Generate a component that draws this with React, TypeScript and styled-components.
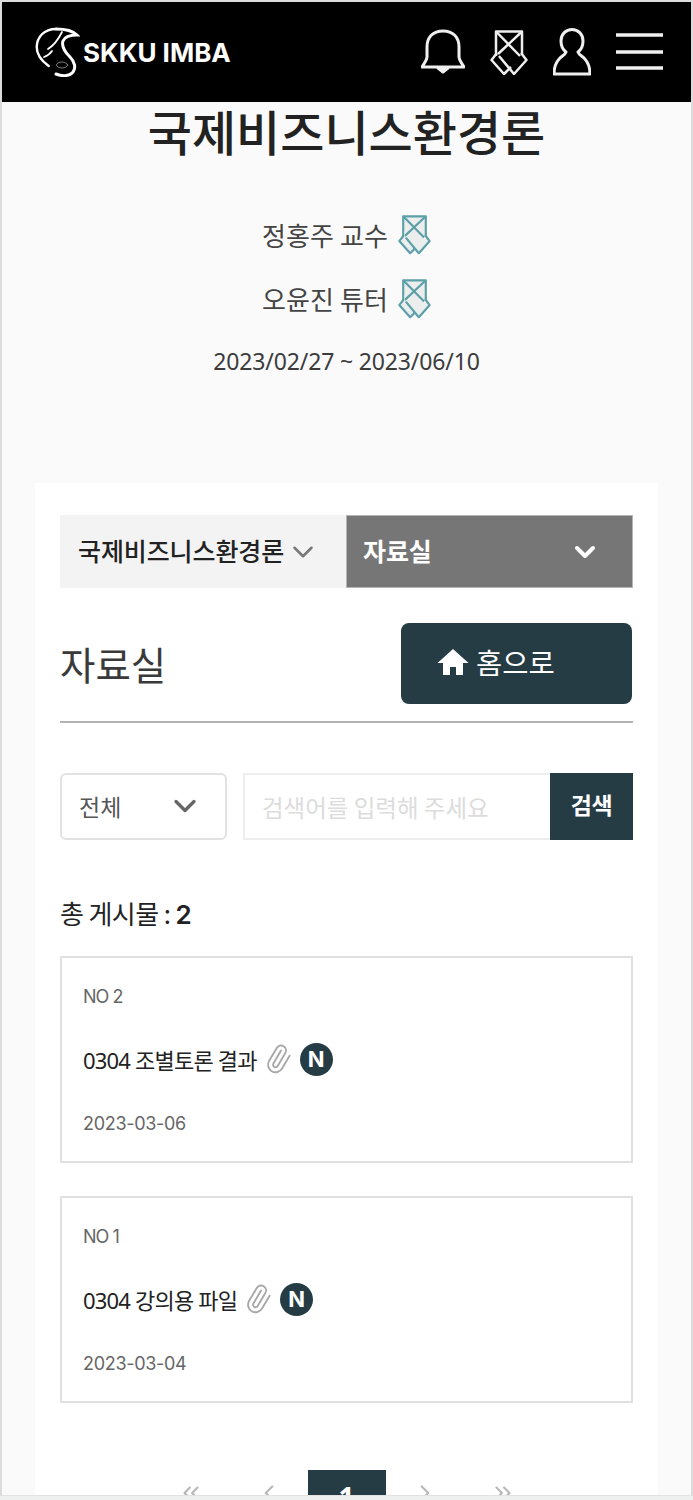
import styled, { createGlobalStyle } from 'styled-components';
import { ChevronDown, ChevronLeft, ChevronRight, ChevronsLeft, ChevronsRight, Paperclip } from 'lucide-react';

const GlobalStyle = createGlobalStyle`
  html, body {
    margin: 0;
    padding: 0;
    background: #eef0f0;
  }
  * {
    box-sizing: border-box;
  }
  body {
    font-family: 'Noto Sans', 'Noto Sans CJK KR', sans-serif;
  }
`;

const Frame = styled.div`
  width: 693px;
  height: 1496px;
  overflow: hidden;
  background: #fafafa;
  border: 2px solid #dcdcdc;
  border-bottom: 1px solid #e2e2e2;
`;

const Header = styled.header`
  height: 100px;
  background: #000;
  display: flex;
  align-items: center;
  justify-content: space-between;
  padding: 0 28px 0 32px;
`;

const Brand = styled.div`
  display: flex;
  align-items: center;
  gap: 3px;
`;

const BrandName = styled.span`
  color: #fff;
  font-family: 'Inter', sans-serif;
  font-size: 26px;
  font-weight: 700;
`;

const HeaderIcons = styled.nav`
  display: flex;
  align-items: center;
  gap: 25px;
`;

const Intro = styled.section`
  display: flex;
  flex-direction: column;
  align-items: center;
  height: 381px;
`;

const CourseTitle = styled.h1`
  margin: 0;
  font-family: 'Noto Sans CJK KR', sans-serif;
  font-size: 48px;
  line-height: 56px;
  font-weight: 500;
  color: #222;
`;

const PersonName = styled.span`
  padding-bottom: 2px;
  letter-spacing: 0.1px;
`;

const Person = styled.div`
  display: flex;
  align-items: center;
  gap: 10px;
  height: 64px;
  font-family: 'Noto Sans CJK KR', sans-serif;
  font-size: 26px;
  color: #444;
  &:first-of-type {
    margin-top: 45px;
  }
`;

const Period = styled.div`
  margin-top: 14px;
  font-size: 23px;
  line-height: 32px;
  letter-spacing: -0.15px;
  color: #3c3c3c;
`;

const Panel = styled.main`
  margin: 0 33px;
  padding: 32px 25px 0;
  background: #fff;
  height: 1100px;
`;

const Tabs = styled.div`
  display: grid;
  grid-template-columns: 286px 287px;
  height: 73px;
`;

const TabLabel = styled.span`
  padding-bottom: 4px;
`;

const Tab = styled.div<{ $active?: boolean }>`
  display: flex;
  align-items: center;
  justify-content: ${(p) => (p.$active ? 'space-between' : 'flex-start')};
  gap: 2px;
  padding: ${(p) => (p.$active ? '0 31px 0 16px' : '0 0 0 18px')};
  background: ${(p) => (p.$active ? '#767676' : '#f3f3f3')};
  border: ${(p) => (p.$active ? '1px solid #b5b5b5' : 'none')};
  color: ${(p) => (p.$active ? '#fff' : '#222')};
  font-family: 'Noto Sans CJK KR', sans-serif;
  font-size: 25px;
  font-weight: ${(p) => (p.$active ? 700 : 500)};
  letter-spacing: -0.1px;
  svg {
    color: ${(p) => (p.$active ? '#fff' : '#777')};
  }
`;

const BoardHead = styled.div`
  display: flex;
  align-items: flex-start;
  justify-content: space-between;
  height: 135px;
  padding: 35px 1px 0 0;
  border-bottom: 2px solid #b2b2b2;
`;

const BoardTitle = styled.h2`
  margin: 15px 0 0;
  font-family: 'Noto Sans CJK KR', sans-serif;
  font-size: 38.5px;
  line-height: 50px;
  font-weight: 400;
  color: #3a3a3a;
`;

const HomeButton = styled.button`
  display: flex;
  align-items: center;
  gap: 7px;
  width: 231px;
  height: 81px;
  padding: 0 0 4px 36px;
  background: #263c44;
  border: none;
  border-radius: 8px;
  color: #fff;
  font-family: 'Noto Sans CJK KR', sans-serif;
  font-size: 28.5px;
  font-weight: 400;
`;

const SearchRow = styled.form`
  display: flex;
  height: 67px;
  margin-top: 50px;
`;

const CategorySelect = styled.div`
  display: flex;
  align-items: center;
  justify-content: space-between;
  width: 167px;
  padding: 0 22px 2px 17px;
  margin-right: 16px;
  background: #fff;
  border: 2px solid #e2e2e2;
  border-radius: 6px;
  font-family: 'Noto Sans CJK KR', sans-serif;
  font-size: 23px;
  color: #555;
  svg {
    color: #666;
  }
`;

const SearchInput = styled.div`
  display: flex;
  align-items: center;
  width: 307px;
  padding-left: 17px;
  border: 2px solid #eeeeee;
  border-right: none;
  font-family: 'Noto Sans CJK KR', sans-serif;
  font-size: 23.5px;
  color: #dcdcdc;
`;

const SearchButton = styled.button`
  width: 83px;
  padding: 0 0 5px;
  background: #263c44;
  border: none;
  color: #fff;
  font-family: 'Noto Sans CJK KR', sans-serif;
  font-size: 23px;
  font-weight: 700;
  letter-spacing: -0.5px;
`;

const TotalCount = styled.div`
  margin-top: 56px;
  height: 36px;
  font-family: 'Noto Sans CJK KR', sans-serif;
  font-size: 26px;
  line-height: 34px;
  letter-spacing: -0.6px;
  color: #222;
`;

const CountNumber = styled.b`
  font-family: 'Inter', sans-serif;
  font-weight: 600;
`;

const PostList = styled.ul`
  display: flex;
  flex-direction: column;
  gap: 33px;
  margin: 24px 0 0;
  padding: 0;
  list-style: none;
`;

const PostCard = styled.li`
  height: 207px;
  padding: 27px 21px 0;
  border: 2px solid #e0e0e0;
`;

const PostNumber = styled.div`
  height: 24px;
  font-family: 'Inter', sans-serif;
  font-size: 18px;
  line-height: 24px;
  letter-spacing: -1px;
  color: #666;
`;

const PostTitle = styled.div`
  display: flex;
  align-items: center;
  height: 34px;
  margin-top: 33px;
  font-family: 'Noto Sans', 'Noto Sans CJK KR', sans-serif;
  font-size: 22px;
  letter-spacing: -0.8px;
  color: #222;
  svg {
    margin-left: 6px;
    color: #a8a8a8;
    transform: rotate(-14deg);
  }
`;

const NewBadge = styled.span`
  display: flex;
  align-items: center;
  justify-content: center;
  width: 33px;
  height: 33px;
  margin-left: 7px;
  border-radius: 50%;
  background: #263c44;
  color: #fff;
  font-family: 'Inter', sans-serif;
  font-size: 22px;
  font-weight: 700;
  letter-spacing: 0;
`;

const PostDate = styled.div`
  margin-top: 36px;
  font-family: 'Inter', sans-serif;
  font-size: 18px;
  line-height: 24px;
  letter-spacing: -0.3px;
  color: #666;
`;

const Pagination = styled.div`
  display: flex;
  justify-content: center;
  margin-top: 67px;
`;

const PageItem = styled.div<{ $current?: boolean }>`
  display: flex;
  align-items: flex-start;
  justify-content: center;
  width: 78px;
  height: 78px;
  padding-top: ${(p) => (p.$current ? '13px' : '10px')};
  background: ${(p) => (p.$current ? '#263c44' : 'transparent')};
  color: ${(p) => (p.$current ? '#fff' : '#b8b8b8')};
  font-size: 28px;
  line-height: 28px;
  font-weight: 700;
`;

function LogoMark() {
  return (
    <svg width="46" height="50" viewBox="0 0 46 50" fill="none" stroke="#fff" strokeLinecap="round">
      <path d="M22 2C10 2 3 10 2.7 20c0 8 5 14 12 19" strokeWidth="2.4" />
      <path d="M22 2c8 0 16 1 21 6-6 0-12 1-14 6-2 6 2 11 7 16 5 5 6 11 3 15-4 5-12 4-17 2" strokeWidth="3" />
      <path d="M28 5c-4 8-9 14-14 17M10 30c3-1 6-3 8-6" strokeWidth="1.8" />
      <ellipse cx="28" cy="38" rx="5.5" ry="3" strokeWidth="0.8" stroke="#999" />
    </svg>
  );
}

function BellIcon() {
  return (
    <svg width="44" height="46" viewBox="0 0 44 46" fill="none" stroke="#efefef" strokeWidth="3" strokeLinejoin="round">
      <path d="M6 28V18C6 8 12 2 22 2s16 6 16 16v10c0 4 3 6 5 10H1c2-4 5-6 5-10z" />
      <path d="M17 39h10l-5 4z" fill="#efefef" />
    </svg>
  );
}

function ScarfIcon({ color, fill, size }: { color: string; fill?: string; size: number }) {
  return (
    <svg width={size} height={(size * 45) / 38} viewBox="0 0 38 45" fill="none" stroke={color} strokeWidth="2.5" strokeLinejoin="round">
      <path d="M6 26V1.5h26V24" fill={fill} />
      <path d="M7 23L1.5 30 14 44l7-7" fill={fill} />
      <path d="M8 16l28.5 14L24 44 7 24z" fill={fill} stroke="none" />
      <path d="M31 23l5.5 7L24 44 9 26" />
      <path d="M6 1.5L30 26M32 1.5L8 24" />
    </svg>
  );
}

function UserIcon() {
  return (
    <svg width="38" height="48" viewBox="0 0 38 48" fill="none" stroke="#efefef" strokeWidth="3" strokeLinejoin="round">
      <path d="M13 24C9 21 8 17 8 13 8 6 13 1.5 19 1.5S30 6 30 13c0 4-1 8-5 11 1 3 4 4 6 6 4 4 6 9 6 16H1c0-7 2-12 6-16 2-2 5-3 6-6z" />
    </svg>
  );
}

function MenuIcon() {
  return (
    <svg width="47" height="40" viewBox="0 0 47 40" stroke="#efefef" strokeWidth="3.4">
      <path d="M0 3h47M0 20h47M0 36h47" />
    </svg>
  );
}

function HomeIcon() {
  return (
    <svg width="32" height="28" viewBox="0 0 32 28" fill="#fff">
      <path d="M16 1L0.5 15H6v12h7v-8h6v8h7V15h5.5z" />
    </svg>
  );
}

const posts = [
  { no: 2, title: '0304 조별토론 결과', date: '2023-03-06' },
  { no: 1, title: '0304 강의용 파일', date: '2023-03-04' },
];

export default function App() {
  return (
    <>
      <GlobalStyle />
      <Frame>
        <Header>
          <Brand>
            <LogoMark />
            <BrandName>SKKU IMBA</BrandName>
          </Brand>
          <HeaderIcons>
            <BellIcon />
            <ScarfIcon color="#efefef" size={38} />
            <UserIcon />
            <MenuIcon />
          </HeaderIcons>
        </Header>

        <Intro>
          <CourseTitle>국제비즈니스환경론</CourseTitle>
          <Person>
            <PersonName>정홍주 교수</PersonName>
            <ScarfIcon color="#5d9fa8" fill="#eceeee" size={33} />
          </Person>
          <Person>
            <PersonName>오윤진 튜터</PersonName>
            <ScarfIcon color="#5d9fa8" fill="#eceeee" size={33} />
          </Person>
          <Period>2023/02/27 ~ 2023/06/10</Period>
        </Intro>

        <Panel>
          <Tabs>
            <Tab>
              <TabLabel>국제비즈니스환경론</TabLabel>
              <ChevronDown size={34} strokeWidth={1.8} />
            </Tab>
            <Tab $active>
              <TabLabel>자료실</TabLabel>
              <ChevronDown size={32} strokeWidth={3} />
            </Tab>
          </Tabs>

          <BoardHead>
            <BoardTitle>자료실</BoardTitle>
            <HomeButton>
              <HomeIcon />
              홈으로
            </HomeButton>
          </BoardHead>

          <SearchRow>
            <CategorySelect>
              전체
              <ChevronDown size={36} strokeWidth={2.2} />
            </CategorySelect>
            <SearchInput>검색어를 입력해 주세요</SearchInput>
            <SearchButton type="button">검색</SearchButton>
          </SearchRow>

          <TotalCount>
            총 게시물 : <CountNumber>2</CountNumber>
          </TotalCount>

          <PostList>
            {posts.map((post) => (
              <PostCard key={post.no}>
                <PostNumber>NO {post.no}</PostNumber>
                <PostTitle>
                  {post.title}
                  <Paperclip size={30} strokeWidth={1.5} />
                  <NewBadge>N</NewBadge>
                </PostTitle>
                <PostDate>{post.date}</PostDate>
              </PostCard>
            ))}
          </PostList>

          <Pagination>
            <PageItem>
              <ChevronsLeft size={26} strokeWidth={2} />
            </PageItem>
            <PageItem>
              <ChevronLeft size={26} strokeWidth={2} />
            </PageItem>
            <PageItem $current>1</PageItem>
            <PageItem>
              <ChevronRight size={26} strokeWidth={2} />
            </PageItem>
            <PageItem>
              <ChevronsRight size={26} strokeWidth={2} />
            </PageItem>
          </Pagination>
        </Panel>
      </Frame>
    </>
  );
}
